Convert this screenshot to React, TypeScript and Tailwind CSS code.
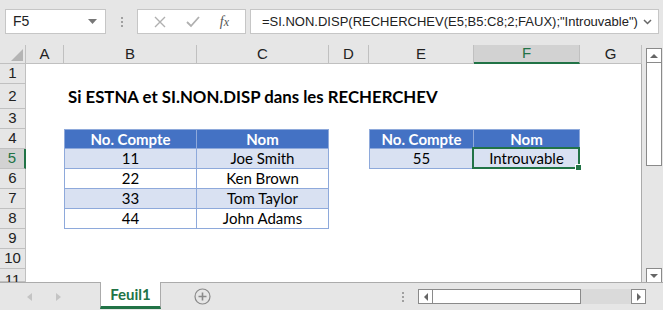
import React from 'react';

const cols = ['A', 'B', 'C', 'D', 'E', 'F', 'G'];
const colW = ['w-[38px]', 'w-[133px]', 'w-[132px]', 'w-[40px]', 'w-[105px]', 'w-[106px]', 'w-[62px]'];

const rows = [
  { n: 1, h: 'h-[20px]' },
  { n: 2, h: 'h-[25px]' },
  { n: 3, h: 'h-[20px]' },
  { n: 4, h: 'h-[20px]' },
  { n: 5, h: 'h-[20px]' },
  { n: 6, h: 'h-[20px]' },
  { n: 7, h: 'h-[20px]' },
  { n: 8, h: 'h-[20px]' },
  { n: 9, h: 'h-[20px]' },
  { n: 10, h: 'h-[20px]' },
  { n: 11, h: 'h-[13px]' },
];

type Cell = { text: string; kind: 'head' | 'band' | 'plain'; first?: boolean; top?: boolean; selected?: boolean };

const data: Record<string, Cell> = {
  B4: { text: 'No. Compte', kind: 'head', first: true, top: true },
  C4: { text: 'Nom', kind: 'head', top: true },
  B5: { text: '11', kind: 'band', first: true },
  C5: { text: 'Joe Smith', kind: 'band' },
  B6: { text: '22', kind: 'plain', first: true },
  C6: { text: 'Ken Brown', kind: 'plain' },
  B7: { text: '33', kind: 'band', first: true },
  C7: { text: 'Tom Taylor', kind: 'band' },
  B8: { text: '44', kind: 'plain', first: true },
  C8: { text: 'John Adams', kind: 'plain' },
  E4: { text: 'No. Compte', kind: 'head', first: true, top: true },
  F4: { text: 'Nom', kind: 'head', top: true },
  E5: { text: '55', kind: 'band', first: true },
  F5: { text: 'Introuvable', kind: 'band', selected: true },
};

const font = { fontFamily: 'Lato, "Liberation Sans", sans-serif' };

function SheetCell({ id, w }: { id: string; w: string }) {
  const c = data[id];
  if (!c) return <div className={`${w} h-full shrink-0`} />;
  const bg = c.kind === 'head' ? 'bg-[#4472c4] text-white font-bold' : c.kind === 'band' ? 'bg-[#d9e1f2] text-black' : 'bg-white text-black';
  return (
    <div
      className={`${w} h-full shrink-0 relative flex items-center justify-center text-[15px] border-r border-b border-[#8ea9db] ${c.first ? 'border-l' : ''} ${c.top ? 'border-t' : ''} ${bg}`}
    >
      {c.text}
      {c.selected && (
        <div className="absolute -left-[2px] -top-[2px] -right-[1px] -bottom-[1px] border-2 border-[#217346]">
          <div className="absolute -right-[4px] -bottom-[4px] w-[7px] h-[7px] bg-[#217346] border border-white" />
        </div>
      )}
    </div>
  );
}

function FormulaBar() {
  return (
    <div className="h-[45px] bg-[#e6e6e6] flex items-start pt-[9px] pl-[5px] pr-[4px]" style={{ fontFamily: '"Liberation Sans", sans-serif' }}>
      <div className="w-[101px] shrink-0 h-[25px] bg-white border border-[#c6c6c6] flex items-center justify-between pl-[7px] pr-[8px] text-[14px] text-[#222]">
        <span>F5</span>
        <svg width="9" height="5" viewBox="0 0 9 5"><path d="M0 0h9L4.5 5z" fill="#777" /></svg>
      </div>
      <div className="w-[31px] shrink-0 h-[25px] flex flex-col items-center justify-center gap-[2px]">
        <div className="w-[2px] h-[2px] bg-[#a0a0a0]" />
        <div className="w-[2px] h-[2px] bg-[#a0a0a0]" />
        <div className="w-[2px] h-[2px] bg-[#a0a0a0]" />
      </div>
      <div className="w-[109px] shrink-0 h-[25px] bg-white border border-[#c6c6c6] flex items-center justify-around px-[6px]">
        <svg width="12" height="12" viewBox="0 0 12 12"><path d="M1 1l10 10M11 1L1 11" stroke="#b0b0b0" strokeWidth="1.4" /></svg>
        <svg width="14" height="12" viewBox="0 0 14 12"><path d="M1 6l4 4 8-9" stroke="#b0b0b0" strokeWidth="1.8" fill="none" /></svg>
        <span className="text-[14px] italic text-[#555]" style={{ fontFamily: '"Liberation Serif", serif' }}>
          f<span className="text-[12px]">x</span>
        </span>
      </div>
      <div className="ml-[4px] flex-1 min-w-0 h-[25px] bg-white border border-[#c6c6c6] flex items-center justify-between pl-[11px] pr-[6px] text-[13px] text-[#222]">
        <span className="whitespace-nowrap">=SI.NON.DISP(RECHERCHEV(E5;B5:C8;2;FAUX);"Introuvable")</span>
        <svg width="9" height="6" viewBox="0 0 9 6"><path d="M1 1l3.5 3.5L8 1" stroke="#666" strokeWidth="1.5" fill="none" /></svg>
      </div>
    </div>
  );
}

function Grid() {
  return (
    <div className="flex bg-white">
      <div className="w-[642px] border-r border-[#ababab]">
        <div className="flex h-[19px] bg-[#e6e6e6] text-[15px] text-[#222]" style={{ fontFamily: '"Liberation Sans", sans-serif' }}>
          <div className="w-[26px] shrink-0 border-r border-b border-[#c0c0c0] flex items-end justify-end p-[2px]">
            <svg width="12" height="12" viewBox="0 0 12 12"><path d="M12 0v12H0z" fill="#b4b4b4" /></svg>
          </div>
          {cols.map((c, i) => (
            <div
              key={c}
              className={`${colW[i]} shrink-0 flex items-center justify-center border-r border-[#c0c0c0] ${c === 'F' ? 'bg-[#d2d2d2] border-b-2 border-b-[#217346] text-[#217346]' : 'border-b'}`}
            >
              {c}
            </div>
          ))}
        </div>
        {rows.map(r => (
          <div key={r.n} className={`flex ${r.h}`}>
            <div
              className={`w-[26px] shrink-0 flex items-center justify-center text-[15px] border-b border-[#c0c0c0] ${r.n === 5 ? 'bg-[#d2d2d2] border-r-2 border-r-[#217346] text-[#217346]' : 'bg-[#e6e6e6] border-r text-[#222]'} ${r.n === 11 ? 'items-start' : ''}`}
              style={{ fontFamily: '"Liberation Sans", sans-serif' }}
            >
              {r.n}
            </div>
            <div className="flex flex-1 overflow-visible relative" style={font}>
              {r.n === 2 ? (
                <>
                  <div className="w-[38px] shrink-0" />
                  <div className="h-full flex items-center pl-[4px] text-[16.8px] font-bold text-black whitespace-nowrap">
                    Si ESTNA et SI.NON.DISP dans les RECHERCHEV
                  </div>
                </>
              ) : (
                cols.map((c, i) => <SheetCell key={c} id={`${c}${r.n}`} w={colW[i]} />)
              )}
            </div>
          </div>
        ))}
      </div>
      <div className="w-[21px] bg-[#e6e6e6] flex flex-col items-center pt-[3px] pl-[2px]">
        <div className="w-[16px] h-[15px] bg-white border border-[#8a8a8a] flex items-center justify-center">
          <svg width="8" height="4" viewBox="0 0 8 4"><path d="M0 4h8L4 0z" fill="#666" /></svg>
        </div>
        <div className="w-[16px] h-[103px] bg-white border border-[#8a8a8a] border-t-0" />
        <div className="flex-1" />
        <div className="w-[16px] h-[15px] bg-white border border-[#8a8a8a] flex items-center justify-center mb-[-1px]">
          <svg width="8" height="4" viewBox="0 0 8 4"><path d="M0 0h8L4 4z" fill="#666" /></svg>
        </div>
      </div>
    </div>
  );
}

function TabBar() {
  return (
    <div className="h-[28px] bg-[#e6e6e6] border-t border-[#ababab] flex items-start relative">
      <div className="w-[100px] h-full flex items-center gap-[24px] pl-[27px]">
        <svg width="5" height="8" viewBox="0 0 5 8"><path d="M5 0v8L0 4z" fill="#c4c4c4" /></svg>
        <svg width="5" height="8" viewBox="0 0 5 8"><path d="M0 0v8l5-4z" fill="#c4c4c4" /></svg>
      </div>
      <div
        className="w-[61px] h-[27px] -mt-[1px] bg-white border-l border-r border-[#ababab] border-b-[3px] border-b-[#217346] flex items-center justify-center text-[15px] font-bold text-[#217346]"
        style={font}
      >
        Feuil1
      </div>
      <div className="w-[82px] h-full flex items-center justify-center">
        <svg width="17" height="17" viewBox="0 0 17 17">
          <circle cx="8.5" cy="8.5" r="7.5" fill="none" stroke="#8a8a8a" strokeWidth="1.2" />
          <path d="M8.5 4.5v8M4.5 8.5h8" stroke="#8a8a8a" strokeWidth="1.6" />
        </svg>
      </div>
      <div className="w-[145px]" />
      <div className="w-[30px] h-full flex flex-col items-center justify-center gap-[2px]">
        <div className="w-[2px] h-[2px] bg-[#a0a0a0]" />
        <div className="w-[2px] h-[2px] bg-[#a0a0a0]" />
        <div className="w-[2px] h-[2px] bg-[#a0a0a0]" />
      </div>
      <div className="mt-[6px] flex h-[15px]">
        <div className="w-[15px] h-full bg-white border border-[#8a8a8a] flex items-center justify-center">
          <svg width="4" height="8" viewBox="0 0 4 8"><path d="M4 0v8L0 4z" fill="#666" /></svg>
        </div>
        <div className="w-[148px] h-full bg-white border-t border-b border-r border-[#8a8a8a]" />
        <div className="w-[50px] h-full bg-[#dadada]" />
        <div className="w-[15px] h-full bg-white border border-[#8a8a8a] flex items-center justify-center">
          <svg width="4" height="8" viewBox="0 0 4 8"><path d="M0 0v8l4-4z" fill="#666" /></svg>
        </div>
      </div>
    </div>
  );
}

export default function App() {
  return (
    <div className="w-[663px] h-[310px] overflow-hidden bg-white">
      <FormulaBar />
      <Grid />
      <TabBar />
    </div>
  );
}
